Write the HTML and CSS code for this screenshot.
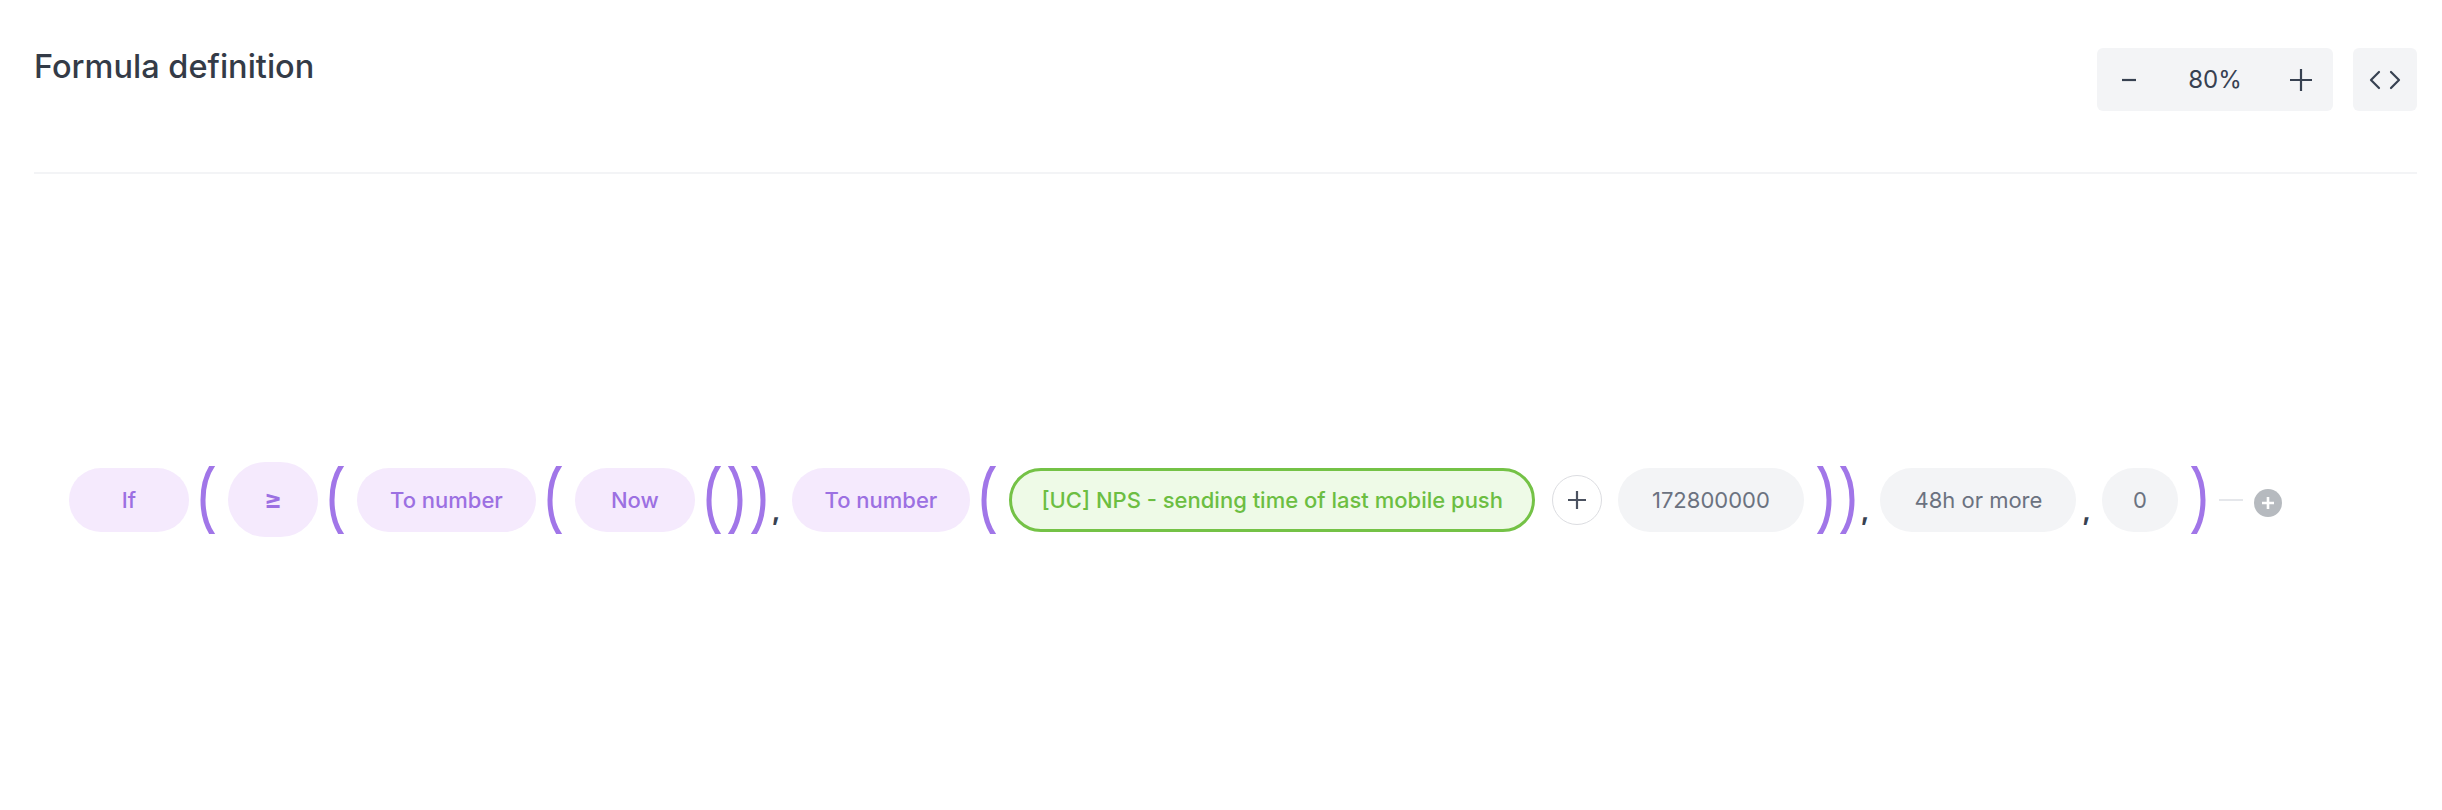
FILE: index.html
```html
<!DOCTYPE html>
<html lang="en">
<head>
<meta charset="utf-8">
<title>Formula definition</title>
<link rel="stylesheet" href="styles.css">
</head>
<body>
<svg class="defs" width="0" height="0" aria-hidden="true">
  <defs>
    <path id="p-open" d="M15 -4 C -1 16, -1 52, 15 72"/>
    <path id="p-close" d="M2 -4 C 18 16, 18 52, 2 72"/>
  </defs>
</svg>
<div class="page">
  <header class="head">
    <h1 class="title">Formula definition</h1>
    <div class="tools">
      <div class="zoom">
        <button class="zbtn" type="button" aria-label="Zoom out">
          <svg width="16" height="16" viewBox="0 0 16 16"><path d="M1 8h14" stroke="#374151" stroke-width="2.2" fill="none"/></svg>
        </button>
        <span class="zval">80%</span>
        <button class="zbtn" type="button" aria-label="Zoom in">
          <svg width="24" height="24" viewBox="0 0 24 24"><path d="M1 12h22M12 1v22" stroke="#374151" stroke-width="2.2" fill="none"/></svg>
        </button>
      </div>
      <button class="code" type="button" aria-label="Code view">
        <svg width="34" height="20" viewBox="0 0 34 20"><path d="M11 2 L3 10 L11 18 M23 2 L31 10 L23 18" stroke="#374151" stroke-width="2.2" fill="none" stroke-linecap="round" stroke-linejoin="round"/></svg>
      </button>
    </div>
  </header>
  <section class="canvas">
    <div class="formula">
      <span class="chip fn">If</span>
      <svg class="paren" viewBox="0 0 17 68"><use href="#p-open"/></svg>
      <span class="chip op">≥</span>
      <svg class="paren" viewBox="0 0 17 68"><use href="#p-open"/></svg>
      <span class="chip fn">To number</span>
      <svg class="paren" viewBox="0 0 17 68"><use href="#p-open"/></svg>
      <span class="chip fn">Now</span>
      <svg class="paren" viewBox="0 0 17 68"><use href="#p-open"/></svg>
      <svg class="paren tight" viewBox="0 0 17 68"><use href="#p-close"/></svg>
      <svg class="paren near" viewBox="0 0 17 68"><use href="#p-close"/></svg>
      <span class="comma">,</span>
      <span class="chip fn">To number</span>
      <svg class="paren" viewBox="0 0 17 68"><use href="#p-open"/></svg>
      <span class="chip attr">[UC] NPS - sending time of last mobile push</span>
      <span class="plus-op">
        <svg width="22" height="22" viewBox="0 0 22 22"><path d="M2 11h18M11 2v18" stroke="#4b5260" stroke-width="2.2" fill="none"/></svg>
      </span>
      <span class="chip val">172800000</span>
      <svg class="paren" viewBox="0 0 17 68"><use href="#p-close"/></svg>
      <svg class="paren near" viewBox="0 0 17 68"><use href="#p-close"/></svg>
      <span class="comma">,</span>
      <span class="chip val">48h or more</span>
      <span class="comma">,</span>
      <span class="chip val short">0</span>
      <svg class="paren" viewBox="0 0 17 68"><use href="#p-close"/></svg>
      <span class="tail-line"></span>
      <span class="add-node">
        <svg width="16" height="16" viewBox="0 0 16 16"><path d="M2 8h12M8 2v12" stroke="#ffffff" stroke-width="2.6" fill="none"/></svg>
      </span>
    </div>
  </section>
</div>
</body>
</html>
```

FILE: styles.css
```css
body {
  margin: 0;
  background: #ffffff;
  font-family: Inter, "Noto Sans", sans-serif;
}

.defs {
  position: absolute;
  width: 0;
  height: 0;
}

.page {
  padding: 47px 25px 0 34px;
}

.head {
  display: flex;
  justify-content: space-between;
  align-items: flex-start;
  padding-bottom: 61px;
  border-bottom: 2px solid #f3f4f6;
}

.title {
  margin: 0;
  font-size: 32.5px;
  line-height: 40px;
  font-weight: 500;
  color: #343b47;
}

.tools {
  display: flex;
  gap: 20px;
  margin-top: 1px;
}

.zoom {
  display: flex;
  align-items: center;
  width: 236px;
  height: 63px;
  background: #f3f4f6;
  border-radius: 6px;
}

.zbtn {
  width: 64px;
  height: 63px;
  border: 0;
  padding: 0;
  background: transparent;
  display: flex;
  align-items: center;
  justify-content: center;
}

.zval {
  flex: 1;
  text-align: center;
  font-size: 24px;
  color: #374151;
}

.code {
  width: 64px;
  height: 63px;
  border: 0;
  padding: 0;
  background: #f3f4f6;
  border-radius: 6px;
  display: flex;
  align-items: center;
  justify-content: center;
}

.canvas {
  padding: 288px 0 0 35px;
}

.formula {
  display: flex;
  align-items: center;
  gap: 11px;
  height: 75px;
}

.chip {
  box-sizing: border-box;
  height: 64px;
  border-radius: 32px;
  display: flex;
  align-items: center;
  justify-content: center;
  font-size: 22px;
  white-space: nowrap;
  padding: 0 33px;
}

.fn {
  background: #f5eafd;
  color: #9c70e2;
  font-weight: 500;
  min-width: 120px;
}

.op {
  width: 90px;
  height: 75px;
  border-radius: 38px;
  padding: 0;
  font-size: 26px;
  font-weight: 700;
  background: #f5eafd;
  color: #9c70e2;
}

.attr {
  background: #eefae7;
  border: 3px solid #74c246;
  color: #6cbe42;
  font-weight: 500;
  padding: 0 29px;
}

.val {
  background: #f3f4f6;
  color: #6b7280;
  font-weight: 400;
  padding: 0 34px;
}

.val.short {
  padding: 0 31px;
}

.paren {
  width: 17px;
  height: 68px;
  flex: none;
  overflow: hidden;
  fill: none;
  stroke: #a176e8;
  stroke-width: 5;
}

.paren.tight {
  margin-left: -8px;
}

.paren.near {
  margin-left: -5px;
}

.comma {
  font-size: 26px;
  font-weight: 700;
  color: #374151;
  line-height: 1;
  padding-top: 22px;
  margin-left: -5px;
}

.plus-op {
  box-sizing: border-box;
  width: 50px;
  height: 50px;
  border: 1.5px solid #dcdde1;
  border-radius: 50%;
  display: flex;
  align-items: center;
  justify-content: center;
  margin-left: 6px;
  margin-right: 5px;
}

.tail-line {
  width: 24px;
  height: 2px;
  background: #e5e7eb;
  margin-left: 2px;
}

.add-node {
  width: 28px;
  height: 28px;
  border-radius: 50%;
  background: #b6babf;
  display: flex;
  align-items: center;
  justify-content: center;
  margin-top: 7px;
}
```
